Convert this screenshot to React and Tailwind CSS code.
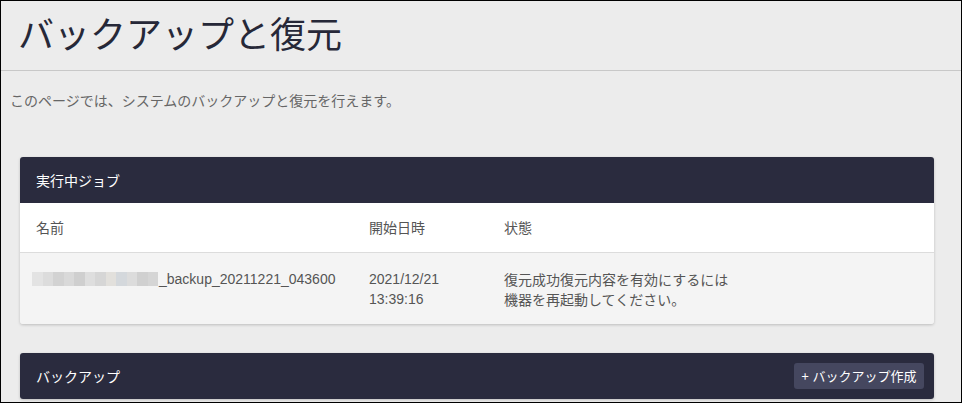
import React from "react"

const jp = { fontFamily: '"Noto Sans CJK JP", "Liberation Sans", sans-serif' }

const blur = ["#e3e3e3", "#dcdcdc", "#d2d2d2", "#d9d9d9", "#cfcfcf", "#dedede", "#d6d6d6", "#e2e0dc", "#d4d8dc", "#dcdcdc", "#d0d0d0", "#d5d5d5"]

const BlurredName = () => (
  <span className="inline-flex h-[14px] align-middle mr-[1px]">
    {blur.map((c, i) => (
      <span key={i} className="w-[10.5px] h-full" style={{ background: c }} />
    ))}
  </span>
)

const App = () => {
  return (
    <div
      className="w-[962px] h-[403px] overflow-hidden border border-black bg-[#ececec] text-[#555]"
      style={jp}
    >
      <div className="h-[70px] border-b border-[#c8c8c8] pl-[17px] pt-[5px]">
        <h1 className="text-[36px] leading-[52px] text-[#262838] font-normal">バックアップと復元</h1>
      </div>

      <p className="pl-[9px] pt-[19px] text-[14px] leading-[20px] text-[#666]">
        このページでは、システムのバックアップと復元を行えます。
      </p>

      <div className="ml-[19px] mr-[27px] mt-[47px] rounded-[3px] shadow-[0_1px_3px_rgba(0,0,0,0.2)] overflow-hidden">
        <div className="h-[46px] bg-[#2a2b3e] pl-[16px] flex items-center text-white text-[14px]">
          実行中ジョブ
        </div>
        <div className="h-[50px] bg-white border-b border-[#dcdcdc] flex items-center text-[14px] text-[#555]">
          <div className="w-[349px] pl-[16px]">名前</div>
          <div className="w-[135px]">開始日時</div>
          <div>状態</div>
        </div>
        <div className="h-[71px] bg-[#f4f4f4] flex pt-[16px] text-[14px] leading-[20px] text-[#555]">
          <div className="w-[349px] pl-[12px] flex items-start" style={{ fontFamily: '"Liberation Sans", sans-serif' }}>
            <div className="flex items-center h-[20px]">
              <BlurredName />
              <span>_backup_20211221_043600</span>
            </div>
          </div>
          <div className="w-[135px]" style={{ fontFamily: '"Liberation Sans", sans-serif' }}>
            2021/12/21
            <br />
            13:39:16
          </div>
          <div>
            復元成功復元内容を有効にするには
            <br />
            機器を再起動してください。
          </div>
        </div>
      </div>

      <div className="ml-[19px] mr-[27px] mt-[29px] rounded-[3px] shadow-[0_1px_3px_rgba(0,0,0,0.2)] overflow-hidden">
        <div className="h-[46px] bg-[#2a2b3e] pl-[16px] pr-[10px] flex items-center justify-between text-white text-[14px]">
          <span>バックアップ</span>
          <button className="h-[26px] w-[130px] rounded-[3px] bg-[#45475f] text-white text-[13px] flex items-center justify-center gap-[4px]">
            <span>+</span>
            <span>バックアップ作成</span>
          </button>
        </div>
      </div>
    </div>
  )
}

export default App
